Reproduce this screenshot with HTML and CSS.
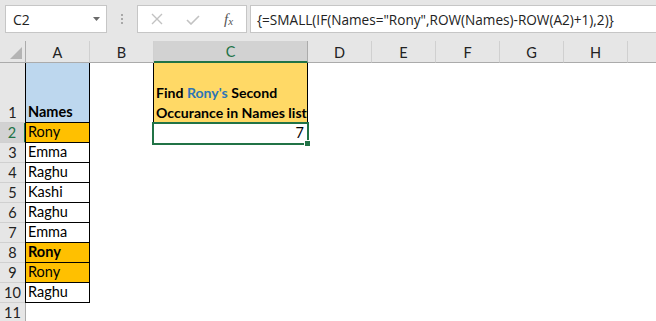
FILE: index.html
```html
<!DOCTYPE html>
<html>
<head>
<meta charset="utf-8">
<link rel="stylesheet" href="styles.css">
</head>
<body>
<div class="app">
  <div class="toolbar">
    <div class="namebox">
      <span class="nb-text">C2</span>
      <svg class="nb-arrow" width="7" height="4" viewBox="0 0 7 4"><path d="M0 0H7L3.5 4Z" fill="#6a6a6a"/></svg>
    </div>
    <div class="grip"><i></i><i></i><i></i></div>
    <div class="btns">
      <svg class="ic-x" width="12" height="12" viewBox="0 0 12 12"><path d="M1 1L11 11M11 1L1 11" stroke="#c2c2c2" stroke-width="1.4" fill="none"/></svg>
      <svg class="ic-check" width="14" height="10" viewBox="0 0 14 10"><path d="M1 5L5 9L13 1" stroke="#c2c2c2" stroke-width="1.6" fill="none"/></svg>
      <span class="fx">f<sub>x</sub></span>
    </div>
    <div class="formula">{=SMALL(IF(Names="Rony",ROW(Names)-ROW(A2)+1),2)}</div>
  </div>

  <div class="sheet">
    <div class="row hdr">
      <div class="corner"><svg width="12" height="12" viewBox="0 0 12 12"><path d="M12 0V12H0Z" fill="#b4b4b4"/></svg></div>
      <div class="ch">A</div><div class="ch">B</div><div class="ch sel">C</div><div class="ch">D</div><div class="ch">E</div><div class="ch">F</div><div class="ch">G</div><div class="ch">H</div><div class="ch last"></div>
    </div>
    <div class="row r1">
      <div class="rh">1</div>
      <div class="cell a blue b">Names</div>
      <div class="cell"></div>
      <div class="cell c1"><span>Find <span class="hl">Rony's</span> Second<br>Occurance in Names list</span></div>
    </div>
    <div class="row">
      <div class="rh sel">2</div>
      <div class="cell a gold">Rony</div>
      <div class="cell"></div>
      <div class="cell c2">7<div class="selbox"><i class="handle"></i></div></div>
    </div>
    <div class="row"><div class="rh">3</div><div class="cell a">Emma</div></div>
    <div class="row"><div class="rh">4</div><div class="cell a">Raghu</div></div>
    <div class="row"><div class="rh">5</div><div class="cell a">Kashi</div></div>
    <div class="row"><div class="rh">6</div><div class="cell a">Raghu</div></div>
    <div class="row"><div class="rh">7</div><div class="cell a">Emma</div></div>
    <div class="row"><div class="rh">8</div><div class="cell a gold b">Rony</div></div>
    <div class="row"><div class="rh">9</div><div class="cell a gold">Rony</div></div>
    <div class="row"><div class="rh">10</div><div class="cell a">Raghu</div></div>
    <div class="row"><div class="rh">11</div></div>
  </div>
</div>
</body>
</html>
```

FILE: styles.css
```css
* { box-sizing: border-box; }
html, body { margin: 0; padding: 0; }
body {
  width: 656px;
  height: 321px;
  overflow: hidden;
  background: #ffffff;
  font-family: Lato, "Liberation Sans", sans-serif;
}
.app { width: 656px; }

.toolbar {
  height: 41px;
  background: #e6e6e6;
  display: flex;
  align-items: flex-start;
  padding: 5px 0 0 5px;
}
.namebox {
  width: 102px;
  height: 28px;
  background: #fff;
  border: 1px solid #c6c6c6;
  display: flex;
  align-items: center;
  justify-content: space-between;
  padding: 0 6px 0 7px;
  font-family: "Open Sans", "Noto Sans", sans-serif;
  font-size: 14px;
  color: #222;
}
.nb-arrow { margin-top: -1px; }
.grip {
  width: 30px;
  height: 28px;
  display: flex;
  flex-direction: column;
  align-items: center;
  justify-content: center;
  gap: 2px;
}
.grip i { display: block; width: 2px; height: 2px; background: #a8a8a8; }
.btns {
  width: 110px;
  height: 28px;
  background: #fff;
  border: 1px solid #c6c6c6;
  display: flex;
  align-items: center;
  padding-left: 13px;
}
.ic-x { margin-right: 23px; }
.ic-check { margin-right: 24px; margin-top: 2px; }
.fx {
  font-family: "Liberation Serif", serif;
  font-style: italic;
  font-size: 15px;
  color: #555;
  line-height: 1;
}
.fx sub { font-size: 11px; vertical-align: -1px; }
.formula {
  margin-left: 3px;
  flex: 1;
  height: 28px;
  background: #fff;
  border: 1px solid #c6c6c6;
  border-right: none;
  display: flex;
  align-items: center;
  padding-left: 6px;
  font-family: "Open Sans", "Noto Sans", sans-serif;
  font-size: 13.6px;
  color: #222;
  white-space: nowrap;
}

.sheet { font-size: 14.5px; color: #000; }
.row {
  display: grid;
  grid-template-columns: 26px 64px 64px 154px 64px 64px 64px 64px 64px 1fr;
  height: 20px;
}
.row.hdr { height: 22px; background: #e6e6e6; }
.row.r1 { height: 60px; }

.corner {
  border-right: 1px solid #ababab;
  border-bottom: 1px solid #ababab;
  display: flex;
  align-items: flex-end;
  justify-content: flex-end;
  padding: 0 3px 3px 0;
}
.ch {
  border-right: 1px solid #d0d0d0;
  border-bottom: 1px solid #ababab;
  display: flex;
  align-items: center;
  justify-content: center;
  color: #222;
  padding-top: 1px;
}
.ch.last { border-right: none; }
.ch.sel {
  background: #d2d2d2;
  color: #217346;
  border-bottom: 2px solid #217346;
  border-right-color: #ababab;
}

.rh {
  background: #e6e6e6;
  border-right: 1px solid #ababab;
  border-bottom: 1px solid #d0d0d0;
  display: flex;
  align-items: flex-end;
  justify-content: center;
  padding-bottom: 0;
  line-height: 18px;
  color: #222;
}
.rh.sel { background: #d2d2d2; color: #217346; border-right: 2px solid #217346; }

.cell {
  display: flex;
  align-items: flex-end;
  padding: 0 3px 1px 3px;
  line-height: 18px;
  white-space: nowrap;
}
.cell.a {
  border-right: 1px solid #000;
  border-bottom: 1px solid #000;
  box-shadow: -1px 0 0 #000;
  padding-left: 2px;
}
.blue { background: #bdd7ee; }
.gold { background: #ffc000; }
.b { font-weight: bold; }

.c1 {
  background: #ffd966;
  border-right: 1px solid #000;
  box-shadow: -1px 0 0 #000;
  font-weight: bold;
  font-size: 14.1px;
  line-height: 20px;
  padding-bottom: 0;
  padding-left: 2px;
}
.hl { color: #2e75b6; }

.c2 {
  position: relative;
  justify-content: flex-end;
  padding-right: 4px;
}
.selbox {
  position: absolute;
  left: -2px;
  top: -1px;
  right: -1px;
  bottom: -2px;
  border: 2px solid #217346;
}
.handle {
  position: absolute;
  right: -4px;
  bottom: -4px;
  width: 7px;
  height: 7px;
  background: #217346;
  border: 1px solid #fff;
}
```
